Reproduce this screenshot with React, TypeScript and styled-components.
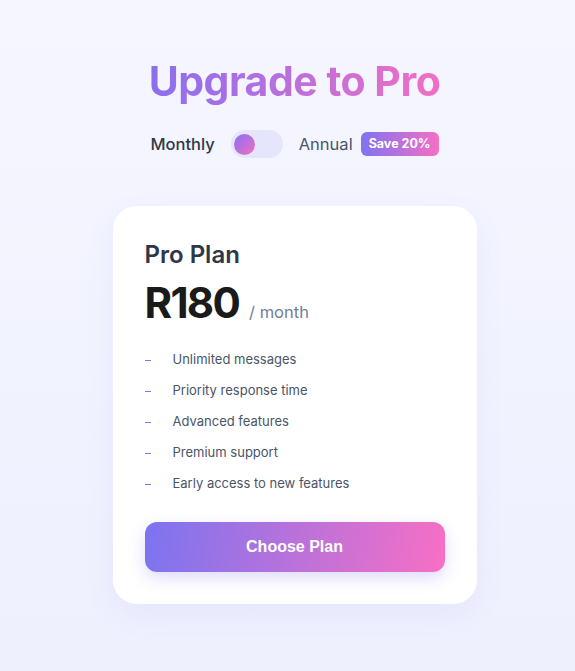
import React from "react";
import styled, { createGlobalStyle } from "styled-components";

const Global = createGlobalStyle`
  html, body { margin: 0; padding: 0; }
  body {
    font-family: "Inter", "Noto Sans", sans-serif;
    background: linear-gradient(180deg, #f5f6ff 0%, #eef0fe 100%);
    min-height: 100vh;
  }
`;

const Page = styled.div`
  min-height: 671px;
  box-sizing: border-box;
  display: flex;
  flex-direction: column;
  align-items: center;
  padding: 56px 0 0 14px;
`;

const Title = styled.h1`
  margin: 0;
  font-size: 41px;
  line-height: 50px;
  font-weight: 700;
  letter-spacing: -0.5px;
  background: linear-gradient(90deg, #8a6ff0 0%, #f06fc5 100%);
  -webkit-background-clip: text;
  background-clip: text;
  color: transparent;
`;

const ToggleRow = styled.div`
  margin-top: 23px;
  display: flex;
  align-items: center;
  height: 30px;
`;

const Label = styled.span<{ $active?: boolean }>`
  font-size: 16.5px;
  font-weight: ${(p) => (p.$active ? 500 : 400)};
  color: ${(p) => (p.$active ? "#2d3748" : "#4a5568")};
`;

const Switch = styled.div`
  width: 52px;
  height: 28px;
  margin: 0 16px;
  box-sizing: border-box;
  padding: 3px;
  border-radius: 14px;
  background: #e5e6fb;
  display: flex;
  align-items: center;
`;

const Knob = styled.div`
  width: 21px;
  height: 21px;
  border-radius: 50%;
  background: linear-gradient(135deg, #8a6ff0 0%, #f06fc5 100%);
`;

const Badge = styled.span`
  margin-left: 8px;
  padding: 3px 8px;
  border-radius: 6px;
  background: linear-gradient(90deg, #7f73ef 0%, #f56fc6 100%);
  color: #fff;
  font-size: 12.5px;
  font-weight: 700;
  line-height: 18px;
`;

const Card = styled.div`
  margin-top: 47px;
  width: 364px;
  box-sizing: border-box;
  padding: 34px 32px 32px;
  background: #fff;
  border-radius: 24px;
  box-shadow: 0 10px 30px rgba(120, 115, 240, 0.08);
`;

const PlanName = styled.h2`
  margin: 0;
  font-size: 24px;
  line-height: 30px;
  font-weight: 600;
  color: #2d3748;
`;

const PriceRow = styled.div`
  margin-top: 9px;
  display: flex;
  align-items: baseline;
`;

const Price = styled.span`
  font-size: 42px;
  line-height: 48px;
  font-weight: 700;
  letter-spacing: -1.7px;
  color: #1a1a1a;
`;

const Period = styled.span`
  margin-left: 10px;
  font-size: 16.5px;
  color: #718096;
`;

const List = styled.ul`
  list-style: none;
  margin: 23px 0 0;
  padding: 0;
  display: flex;
  flex-direction: column;
  gap: 13px;
`;

const Item = styled.li`
  display: flex;
  align-items: center;
  height: 18px;
  font-size: 13px;
  line-height: 18px;
  color: #4a5568;
`;

const Dash = styled.span`
  flex: none;
  width: 6px;
  height: 1px;
  margin: 2px 22px 0 0;
  background: #8174f2;
`;

const Button = styled.button`
  margin-top: 30px;
  width: 100%;
  height: 50px;
  border: none;
  border-radius: 12px;
  background: linear-gradient(100deg, #7b74f0 0%, #f86fc4 100%);
  color: #fff;
  font-family: "Liberation Sans", Arial, sans-serif;
  font-size: 16px;
  font-weight: 700;
  box-shadow: 0 6px 16px rgba(124, 116, 240, 0.25);
  cursor: pointer;
`;

const features = [
  "Unlimited messages",
  "Priority response time",
  "Advanced features",
  "Premium support",
  "Early access to new features",
];

export default function App() {
  return (
    <>
      <Global />
      <Page>
        <Title>Upgrade to Pro</Title>
        <ToggleRow>
          <Label $active>Monthly</Label>
          <Switch>
            <Knob />
          </Switch>
          <Label>Annual</Label>
          <Badge>Save 20%</Badge>
        </ToggleRow>
        <Card>
          <PlanName>Pro Plan</PlanName>
          <PriceRow>
            <Price>R180</Price>
            <Period>/ month</Period>
          </PriceRow>
          <List>
            {features.map((f) => (
              <Item key={f}>
                <Dash />
                {f}
              </Item>
            ))}
          </List>
          <Button>Choose Plan</Button>
        </Card>
      </Page>
    </>
  );
}
